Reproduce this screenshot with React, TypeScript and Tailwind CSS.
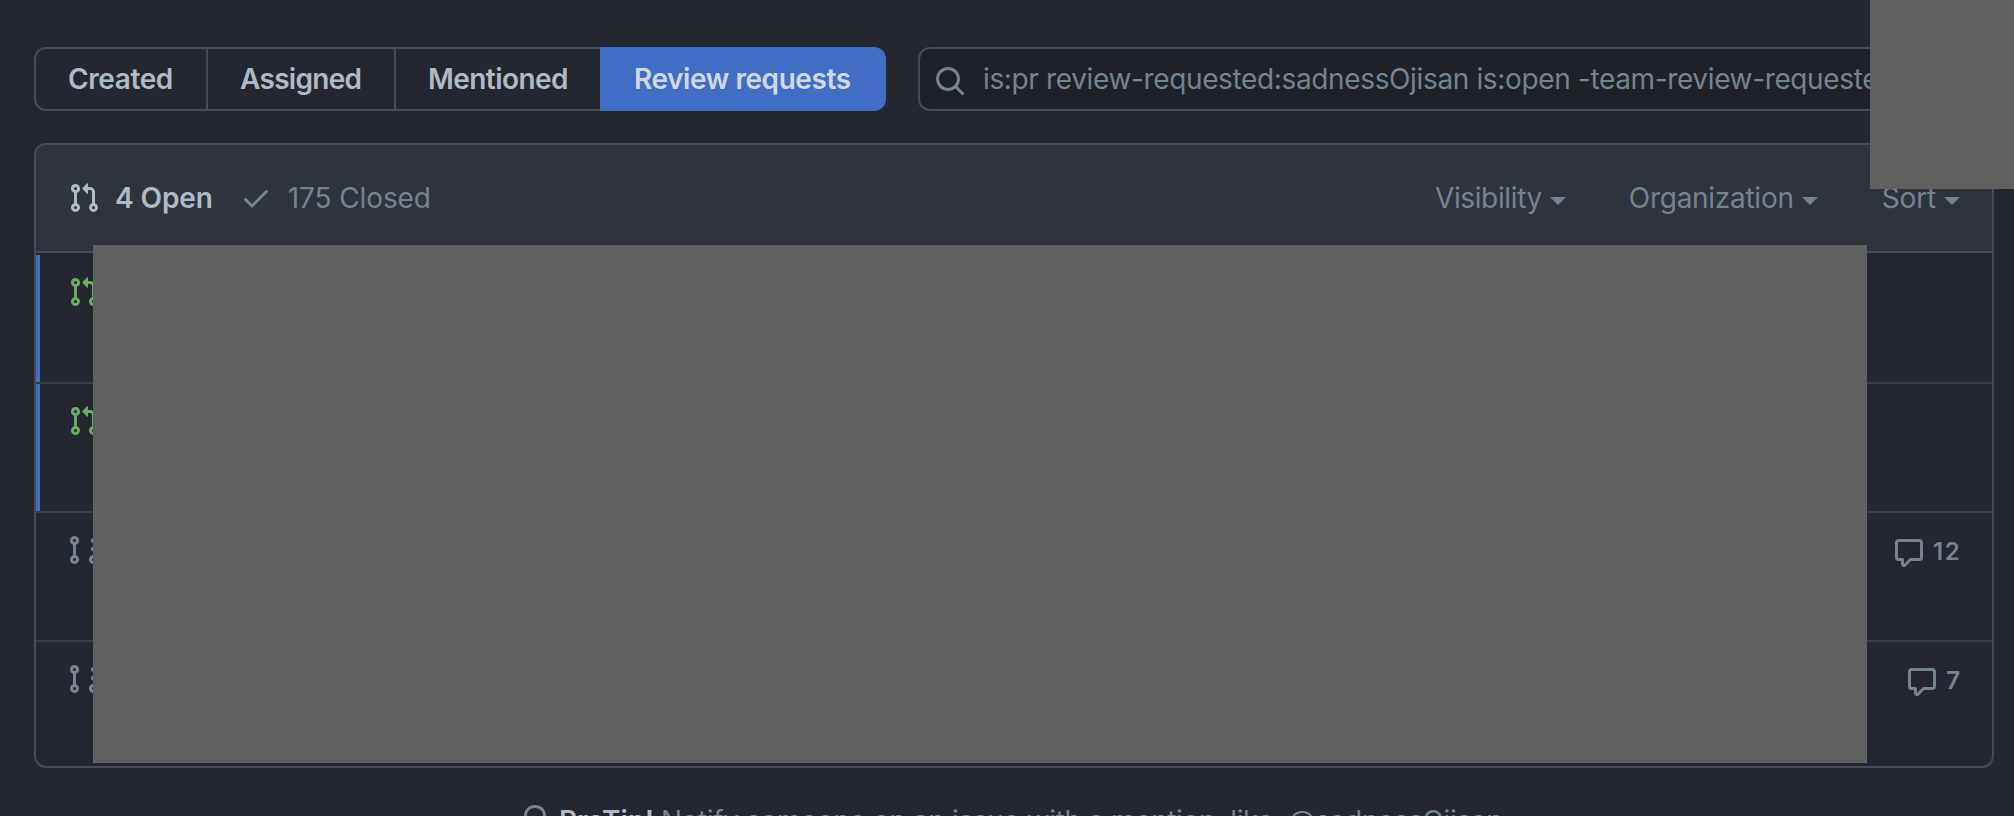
import React from "react";

const paths = {
  pull: "M7.177 3.073L9.573.677A.25.25 0 0110 .854v4.792a.25.25 0 01-.427.177L7.177 3.427a.25.25 0 010-.354zM3.75 2.5a.75.75 0 100 1.5.75.75 0 000-1.5zm-2.25.75a2.25 2.25 0 113 2.122v5.256a2.251 2.251 0 11-1.5 0V5.372A2.25 2.25 0 011.5 3.25zM11 2.5h-1V4h1a1 1 0 011 1v5.628a2.251 2.251 0 101.5 0V5A2.5 2.5 0 0011 2.5zm1 10.25a.75.75 0 111.5 0 .75.75 0 01-1.5 0zM3.75 12a.75.75 0 100 1.5.75.75 0 000-1.5z",
  draft: "M2.5 3.25a.75.75 0 111.5 0 .75.75 0 01-1.5 0zM3.25 1a2.25 2.25 0 00-.75 4.372v5.256a2.251 2.251 0 101.5 0V5.372A2.25 2.25 0 003.25 1zm0 11a.75.75 0 100 1.5.75.75 0 000-1.5zm9.5 3a2.25 2.25 0 100-4.5 2.25 2.25 0 000 4.5zm0-3a.75.75 0 100 1.5.75.75 0 000-1.5zM14 7.5a1.25 1.25 0 11-2.5 0 1.25 1.25 0 012.5 0zm0-4.25a1.25 1.25 0 11-2.5 0 1.25 1.25 0 012.5 0z",
  check: "M13.78 4.22a.75.75 0 010 1.06l-7.25 7.25a.75.75 0 01-1.06 0L2.22 9.28a.75.75 0 011.06-1.06L6 10.94l6.72-6.72a.75.75 0 011.06 0z",
  search: "M11.5 7a4.499 4.499 0 11-8.998 0A4.499 4.499 0 0111.5 7zm-.82 4.74a6 6 0 111.06-1.06l3.04 3.04a.75.75 0 11-1.06 1.06l-3.04-3.04z",
  comment: "M2.75 2.5a.25.25 0 00-.25.25v7.5c0 .138.112.25.25.25h2a.75.75 0 01.75.75v2.19l2.72-2.72a.75.75 0 01.53-.22h4.5a.25.25 0 00.25-.25v-7.5a.25.25 0 00-.25-.25H2.75zM1 2.75C1 1.784 1.784 1 2.75 1h10.5c.966 0 1.75.784 1.75 1.75v7.5A1.75 1.75 0 0113.25 12H9.06l-2.573 2.573A1.457 1.457 0 014 13.543V12H2.75A1.75 1.75 0 011 10.25v-7.5z",
  bulb: "M8 1.5c-2.363 0-4 1.69-4 3.75 0 .984.424 1.625.984 2.304l.214.253c.223.264.47.556.673.848.284.411.537.896.621 1.49a.75.75 0 01-1.484.211c-.04-.282-.163-.547-.37-.847a8.695 8.695 0 00-.542-.68c-.084-.1-.173-.205-.268-.32C3.201 7.75 2.5 6.766 2.5 5.25 2.5 2.31 4.863 0 8 0s5.5 2.31 5.5 5.25c0 1.516-.701 2.5-1.328 3.259-.095.115-.184.22-.268.319-.207.245-.383.453-.541.681-.208.3-.33.565-.37.847a.75.75 0 01-1.485-.212c.084-.593.337-1.078.621-1.489.203-.292.45-.584.673-.848.075-.088.147-.173.213-.253.561-.679.985-1.32.985-2.304 0-2.06-1.637-3.75-4-3.75zM6 15.25a.75.75 0 01.75-.75h2.5a.75.75 0 010 1.5h-2.5a.75.75 0 01-.75-.75zM5.75 12a.75.75 0 000 1.5h4.5a.75.75 0 000-1.5h-4.5z",
};

function Icon({ name, className = "" }: { name: keyof typeof paths; className?: string }) {
  return (
    <svg viewBox="0 0 16 16" className={`size-8 shrink-0 ${className}`} fill="currentColor" fillRule="evenodd">
      <path d={paths[name]} />
    </svg>
  );
}

function Filter({ label, className }: { label: string; className: string }) {
  return (
    <button className={`flex items-center ${className}`}>
      <span>{label}</span>
      <svg viewBox="0 0 16 8" className="mt-[6px] ml-[8px] h-2 w-4" fill="currentColor">
        <path d="M0 0h16L8 8z" />
      </svg>
    </button>
  );
}

const rows = [
  { unread: true, draft: false, comments: "" },
  { unread: true, draft: false, comments: "" },
  { unread: false, draft: true, comments: "12" },
  { unread: false, draft: true, comments: "7" },
];

export default function App() {
  return (
    <div className="relative h-[816px] w-[2014px] overflow-hidden bg-[#24272f] pt-[47px] pr-[20px] pl-[34px] font-['Inter',sans-serif] text-[28px] leading-[42px] text-[#768390]">
      <div className="flex h-16 gap-8">
        <nav className="flex shrink-0 font-semibold text-[#b0bac6]">
          <button className="w-[174px] rounded-l-[12px] border-2 border-[#464c56] pl-[32px] text-left tracking-[-0.4px]">Created</button>
          <button className="w-[188px] border-y-2 border-r-2 border-[#464c56] pl-[32px] text-left tracking-[-0.7px]">Assigned</button>
          <button className="w-[204px] border-y-2 border-[#464c56] pl-[32px] text-left tracking-[-0.55px]">Mentioned</button>
          <button className="w-[286px] rounded-r-[12px] bg-[#416dc4] pl-[34px] text-left tracking-[-0.43px] text-[#cfd9e5]">Review requests</button>
        </nav>
        <div className="flex h-16 min-w-0 flex-1 items-center overflow-hidden rounded-[12px] border-2 border-[#464c56] bg-[#1e2128] pl-[14px] whitespace-nowrap">
          <Icon name="search" className="mt-1" />
          <span className="ml-[17px] tracking-[-0.36px]">is:pr review-requested:sadnessOjisan is:open -team-review-requested:</span>
        </div>
      </div>

      <main className="mt-8 h-[625px] w-[1960px] overflow-hidden rounded-[12px] border-2 border-[#464c56]">
        <header className="flex h-[108px] items-center border-b-2 border-[#464c56] bg-[#2f333b] pr-8 pl-8">
          <Icon name="pull" className="text-[#b0bac6]" />
          <span className="ml-[15px] font-semibold tracking-[-0.11px] text-[#b0bac6]">4 Open</span>
          <Icon name="check" className="ml-[27px]" />
          <span className="ml-[16px] tracking-[-0.1px]">175 Closed</span>
          <div className="ml-auto flex">
            <Filter label="Visibility" className="tracking-[-0.37px]" />
            <Filter label="Organization" className="ml-[63px] tracking-[-0.28px]" />
            <Filter label="Sort" className="ml-[64px] tracking-[-0.14px]" />
          </div>
        </header>
        {rows.map((row, i) => (
          <section
            key={i}
            className={`flex items-start justify-between pr-8 ${i === 0 ? "h-[129px]" : "h-[129px] border-t-2 border-[#373c45]"}`}
          >
            <div className={`flex h-full w-8 shrink-0 flex-col ${i === 0 ? "pt-[2px]" : ""}`}>
              <div className={`w-1 flex-1 ${row.unread ? "bg-[#416dc4]" : ""}`} />
            </div>
            <Icon
              name={row.draft ? "draft" : "pull"}
              className={`${i === 0 ? "mt-[23px]" : "mt-[21px]"} ${row.draft ? "" : "text-[#6bab63]"}`}
            />
            <div className="mt-[21px] ml-auto flex items-center text-[24px] leading-[36px] font-semibold">
              {row.comments && (
                <>
                  <Icon name="comment" className="mt-[2px]" />
                  <span className={`ml-[8px] ${row.comments === "12" ? "-mr-px tracking-[1.4px]" : ""}`}>{row.comments}</span>
                </>
              )}
            </div>
          </section>
        ))}
      </main>

      <footer className="mt-[32px] flex items-center pl-[485px] whitespace-nowrap">
        <Icon name="bulb" />
        <strong className="ml-[8px] font-semibold tracking-[-0.12px] text-[#b0bac6]">ProTip!</strong>
        <span className="ml-[7px] tracking-[-0.38px]">Notify someone on an issue with a mention, like: @sadnessOjisan.</span>
      </footer>

      <div className="absolute top-[245px] left-[93px] h-[518px] w-[1774px] bg-[#606060]" />
      <div className="absolute top-0 left-[1870px] h-[189px] w-[144px] bg-[#606060]" />
    </div>
  );
}
